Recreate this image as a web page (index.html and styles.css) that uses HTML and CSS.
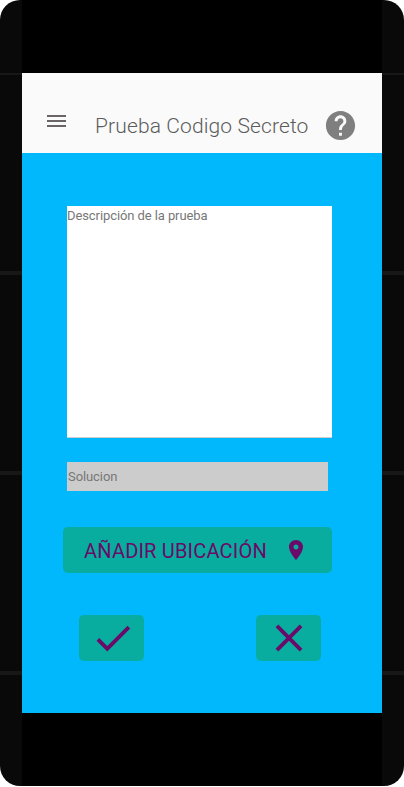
FILE: index.html
```html
<!DOCTYPE html>
<html lang="es">
<head>
<meta charset="utf-8">
<title>Prueba Codigo Secreto</title>
<link rel="stylesheet" href="styles.css">
</head>
<body>
<div class="device">
  <div class="screen">
    <header class="toolbar">
      <svg class="menu" viewBox="0 0 19 12"><path d="M0 0h19v2H0zM0 5h19v2H0zM0 10h19v2H0z"/></svg>
      <h1 class="title">Prueba Codigo Secreto</h1>
      <svg class="help" viewBox="0 0 24 24"><path d="M12 2C6.48 2 2 6.48 2 12s4.48 10 10 10 10-4.480 10-10S17.520 2 12 2zm1 17h-2v-2h2v2zm2.070-7.750l-.9.920C13.450 12.900 13 13.500 13 15h-2v-.5c0-1.100.45-2.100 1.170-2.830l1.240-1.260c.37-.36.590-.86.590-1.410 0-1.100-.9-2-2-2s-2 .9-2 2H8c0-2.210 1.790-4 4-4s4 1.790 4 4c0 .88-.36 1.680-.93 2.250z"/></svg>
    </header>
    <main class="form">
      <textarea class="description" placeholder="Descripción de la prueba"></textarea>
      <input class="solution" placeholder="Solucion">
      <button class="button location"><span>AÑADIR UBICACIÓN</span>
        <svg class="pin" viewBox="0 0 24 24"><path d="M12 2C8.130 2 5 5.130 5 9c0 5.250 7 13 7 13s7-7.750 7-13c0-3.870-3.130-7-7-7zm0 9.500c-1.380 0-2.500-1.120-2.500-2.500s1.120-2.500 2.500-2.500 2.500 1.120 2.500 2.500-1.120 2.500-2.500 2.500z"/></svg>
      </button>
      <div class="actions">
        <button class="button action" aria-label="Aceptar"><svg class="check" viewBox="0 0 24 24"><path d="M9 16.170L4.830 12l-1.420 1.410L9 19 21 7l-1.410-1.410z"/></svg></button>
        <button class="button action" aria-label="Cancelar"><svg class="close" viewBox="0 0 24 24"><path d="M19 6.410L17.590 5 12 10.590 6.410 5 5 6.410 10.590 12 5 17.590 6.410 19 12 13.410 17.590 19 19 17.590 13.410 12z"/></svg></button>
      </div>
    </main>
  </div>
</div>
</body>
</html>
```
FILE: styles.css
```css
* { box-sizing: border-box; }
body { margin: 0; background: #fff; font-family: Roboto, sans-serif; overflow: hidden; }
svg { display: block; flex: none; }
.device {
  width: 404px;
  height: 786px;
  padding: 73px 22px;
  border-radius: 20px;
  background:
    linear-gradient(#000, #000) 22px 0 / 360px 100% no-repeat,
    linear-gradient(#171717, #171717) 0 73px / 100% 2px no-repeat,
    linear-gradient(#171717, #171717) 0 271px / 100% 4px no-repeat,
    linear-gradient(#171717, #171717) 0 471px / 100% 4px no-repeat,
    linear-gradient(#171717, #171717) 0 671px / 100% 4px no-repeat,
    #090909;
}
.screen { width: 360px; height: 640px; background: #00b8fb; }
.toolbar { display: flex; align-items: flex-start; height: 80px; padding-left: 25px; background: #fafafa; }
.menu { width: 19px; height: 12px; margin-top: 42px; fill: #6b6467; }
.title {
  width: 228px;
  margin: 41px 0 0 29px;
  font-size: 21px;
  line-height: 25px;
  font-weight: 300;
  letter-spacing: 0.12px;
  color: #5c5c5c;
  white-space: nowrap;
}
.help { width: 35px; height: 35px; margin-top: 35px; fill: #7f7f7f; }
.form { display: flex; flex-direction: column; padding: 53px 41px 0; align-items: flex-start; }
.description, .solution {
  display: block;
  margin: 0 0 0 4px;
  border: 0;
  border-radius: 0;
  font: 13px/15px Roboto, sans-serif;
  letter-spacing: -0.09px;
  resize: none;
}
.description { width: 265px; height: 232px; padding: 2px 0; background: #fff; border-bottom: 1px solid #ccc; }
.solution { width: 261px; height: 29px; margin-top: 24px; padding: 0 1px; background: #ccc; }
.description::placeholder, .solution::placeholder { color: #777; opacity: 1; }
.button {
  display: flex;
  align-items: center;
  border: 0;
  border-radius: 5px;
  padding: 0;
  background: #09ad9f;
  color: #6a0a69;
  fill: #6a0a69;
  font-family: Roboto, sans-serif;
}
.location { width: 269px; height: 46px; margin-top: 36px; padding-left: 21px; font-size: 20px; line-height: 24px; letter-spacing: 0.2px; }
.location span { width: 200px; text-align: left; white-space: nowrap; padding-top: 2px; }
.pin { width: 24px; height: 24px; }
.actions { display: flex; gap: 112px; margin: 42px 0 0 16px; }
.action { width: 65px; height: 46px; justify-content: center; }
.check { width: 46px; height: 46px; margin-left: 2px; }
.close { width: 46px; height: 46px; }
```
